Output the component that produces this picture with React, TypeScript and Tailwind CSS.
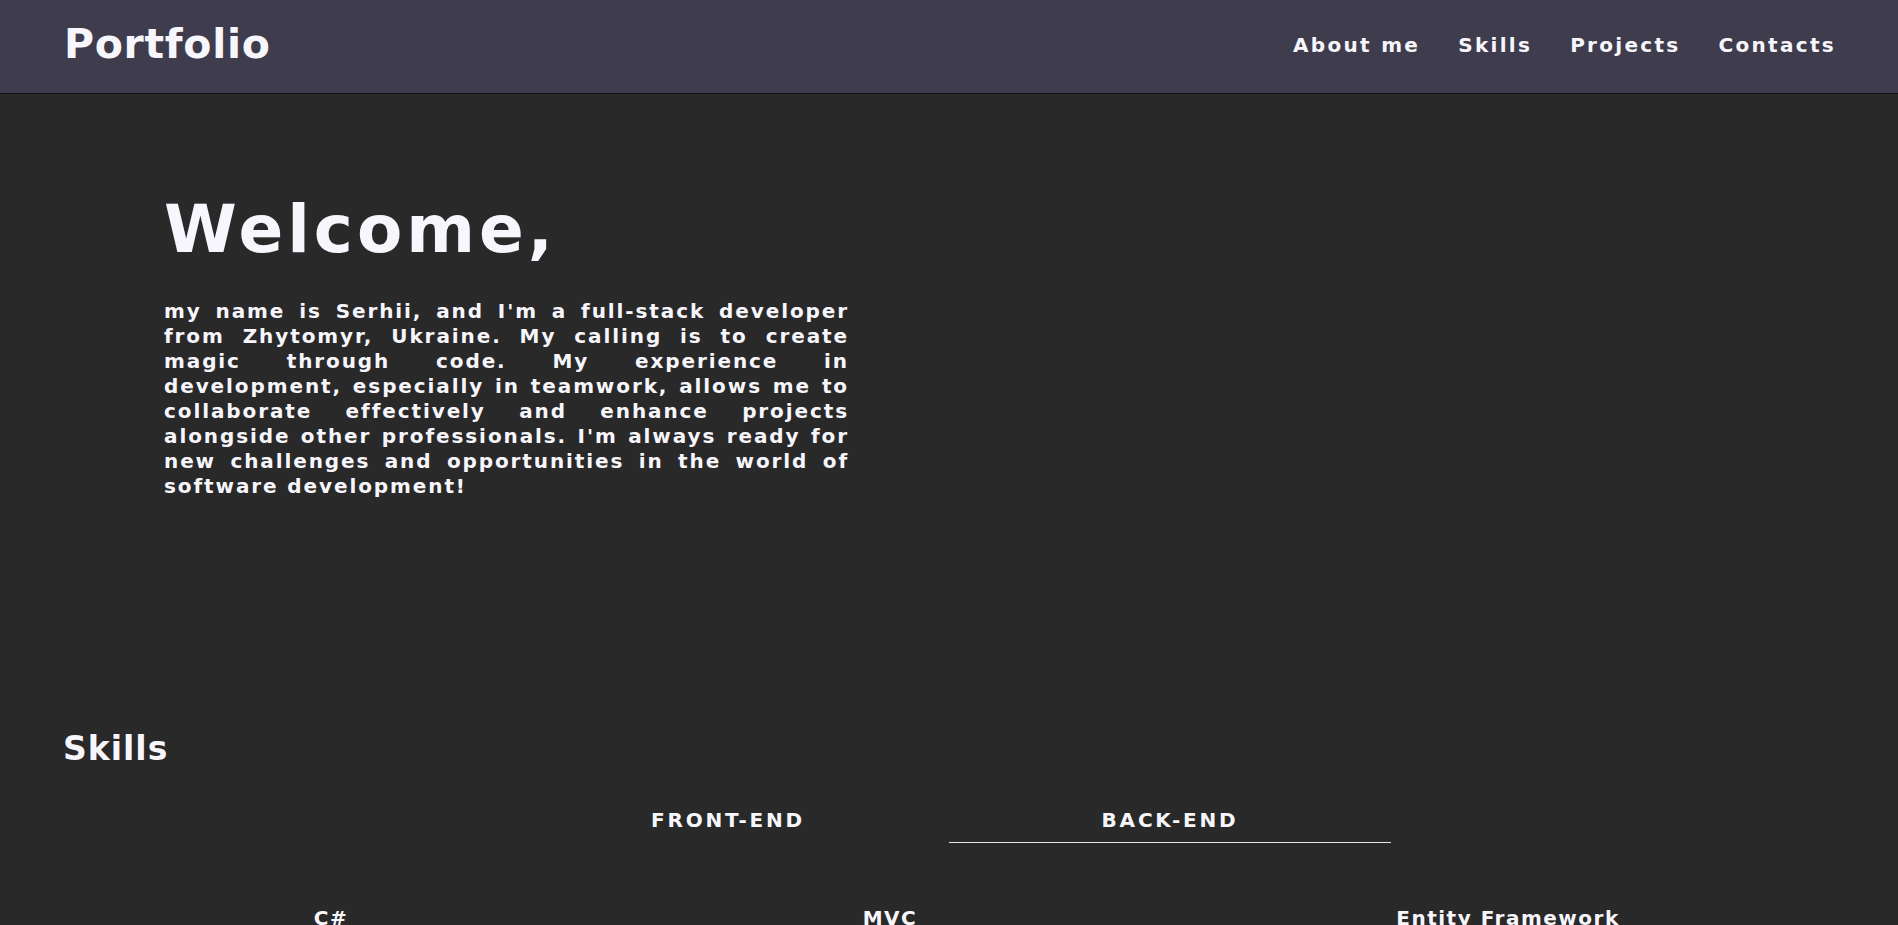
import React from "react";

const lines = [
  "my name is Serhii, and I'm a full-stack developer",
  "from Zhytomyr, Ukraine. My calling is to create",
  "magic through code. My experience in",
  "development, especially in teamwork, allows me to",
  "collaborate effectively and enhance projects",
  "alongside other professionals. I'm always ready for",
  "new challenges and opportunities in the world of",
];

export default function App() {
  return (
    <div
      className="min-h-screen bg-[#292929] text-[#f7f6fc]"
      style={{ fontFamily: '"DejaVu Sans", "Liberation Sans", sans-serif' }}
    >
      <header className="h-[94px] bg-[#3f3d4d] border-b border-[#121212] flex items-center justify-between pl-[64px] pr-[62px] pb-[4px]">
        <div className="text-[41px] leading-none font-bold tracking-[0.7px]">Portfolio</div>
        <nav className="flex gap-[38px] text-[20px] font-bold tracking-[2.3px]">
          <a>About me</a>
          <a>Skills</a>
          <a>Projects</a>
          <a>Contacts</a>
        </nav>
      </header>

      <section className="pl-[164px] pt-[103px]">
        <h1 className="text-[66px] leading-none font-bold tracking-[4px]">Welcome,</h1>
        <div className="w-[685px] mt-[36px] text-[20px] leading-[25px] font-bold tracking-[1.9px]">
          {lines.map((l) => (
            <div key={l} className="text-justify [text-align-last:justify] whitespace-nowrap">
              {l}
            </div>
          ))}
          <div>software development!</div>
        </div>
      </section>

      <section className="mt-[233px]">
        <h2 className="pl-[63px] text-[33px] leading-none font-bold tracking-[1px]">Skills</h2>
        <div className="mt-[43px] flex justify-center">
          <div className="w-[442px] text-center text-[20px] leading-[24px] font-bold tracking-[2.8px] pb-[10px] border-b border-transparent">
            FRONT-END
          </div>
          <div className="w-[442px] text-center text-[20px] leading-[24px] font-bold tracking-[2.8px] pb-[10px] border-b border-[#e6e6e6]">
            BACK-END
          </div>
        </div>
        <div className="mt-[63px] grid grid-cols-[662px_456px_1fr] text-center text-[20px] leading-[24px] font-bold tracking-[1.5px]">
          <div>C#</div>
          <div>MVC</div>
          <div>Entity Framework</div>
        </div>
      </section>
    </div>
  );
}
